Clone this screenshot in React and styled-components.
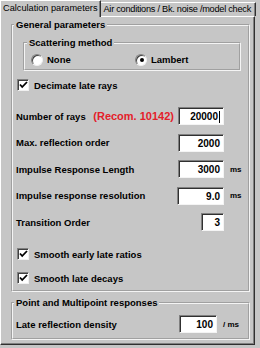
import React from 'react'
import styled, { createGlobalStyle } from 'styled-components'

const face = '#c6c6c6'

const GlobalStyle = createGlobalStyle`
  body {
    margin: 0;
    background: ${face};
  }
`

const Window = styled.div`
  width: 260px;
  height: 348px;
  background: ${face};
  font-family: "Liberation Sans", Arial, sans-serif;
  color: #000;
  overflow: hidden;
`

const TabStrip = styled.div`
  display: flex;
  align-items: flex-end;
  height: 16px;
  width: 256px;
  position: relative;
  z-index: 1;
`

const Tab = styled.div`
  box-sizing: border-box;
  height: ${p => (p.$active ? '17px' : '14px')};
  margin-bottom: ${p => (p.$active ? '-1px' : '0')};
  padding: ${p => (p.$active ? '1px 3px 0 2px' : '0 2px 0 2px')};
  font-size: 9.2px;
  letter-spacing: ${p => (p.$active ? '0' : '-0.25px')};
  line-height: 13px;
  white-space: nowrap;
  overflow: hidden;
  background: ${face};
  border-top: 1px solid #fff;
  border-left: ${p => (p.$active ? '1px solid #fff' : 'none')};
  border-right: 1px solid #303030;
  box-shadow: inset -1px 0 0 #808080;
  flex: ${p => (p.$active ? '0 0 auto' : '1 1 auto')};
`

const Panel = styled.div`
  box-sizing: border-box;
  width: 255px;
  height: 329px;
  padding: 1px 4px 0 10px;
  border-top: 1px solid #fff;
  border-left: 1px solid #fff;
  border-right: 1px solid #303030;
  border-bottom: 1px solid #303030;
  box-shadow: inset -1px -1px 0 #808080;
`

const Group = styled.fieldset`
  margin: ${p => p.$margin || '0'};
  padding: ${p => p.$padding || '0 0 5px 3px'};
  border: 2px groove #f4f4f4;
  min-width: 0;
`

const Legend = styled.legend`
  margin-left: ${p => p.$offset || '-2px'};
  padding: 0 2px;
  font-size: 9.5px;
  font-weight: bold;
  line-height: 13px;
`

const RadioRow = styled.div`
  display: grid;
  grid-template-columns: 104px auto;
  align-items: center;
  margin-top: 4px;
  height: 13px;
`

const RadioItem = styled.div`
  display: flex;
  align-items: center;
  gap: 4px;
  font-size: 9.5px;
  font-weight: bold;
`

const RadioCircle = styled.span`
  box-sizing: border-box;
  width: 12px;
  height: 12px;
  border-radius: 50%;
  background: #fff;
  border: 1px solid;
  border-color: #808080 #f0f0f0 #f0f0f0 #808080;
  box-shadow: inset 1px 1px 0 #404040;
  display: flex;
  align-items: center;
  justify-content: center;
`

const RadioDot = styled.span`
  width: 4px;
  height: 4px;
  border-radius: 50%;
  background: #000;
  margin: 1px 0 0 1px;
`

const CheckRow = styled.div`
  display: flex;
  align-items: center;
  gap: 5px;
  height: 14px;
  margin-top: ${p => p.$top || '0'};
  padding-left: 1px;
  font-size: 9.5px;
  font-weight: bold;
`

const CheckBox = styled.span`
  box-sizing: border-box;
  width: 12px;
  height: 12px;
  background: #fff;
  border: 1px solid;
  border-color: #808080 #f0f0f0 #f0f0f0 #808080;
  box-shadow: inset 1px 1px 0 #404040;
  display: flex;
  align-items: center;
  justify-content: center;
`

const FieldGrid = styled.div`
  display: grid;
  grid-auto-rows: 18px;
  row-gap: 8.5px;
  margin-top: ${p => p.$top || '15px'};
`

const FieldRow = styled.div`
  display: flex;
  align-items: center;
  font-size: 9.5px;
  font-weight: bold;
`

const Label = styled.span`
  flex: 1 1 auto;
  white-space: nowrap;
`

const Hint = styled.span`
  color: #e4202a;
  font-size: 11px;
  margin-right: 4px;
  white-space: nowrap;
`

const Field = styled.div`
  box-sizing: border-box;
  width: ${p => p.$width}px;
  height: 18px;
  background: #fff;
  border: 1px solid;
  border-color: #808080 #f4f4f4 #f4f4f4 #808080;
  box-shadow: inset 1px 1px 0 #303030;
  display: flex;
  align-items: center;
  justify-content: flex-end;
  padding: 1px 3px 0 0;
  font-size: 10px;
  font-weight: bold;
`

const Caret = styled.span`
  width: 1px;
  height: 12px;
  background: #000;
  margin-left: 1px;
`

const Unit = styled.span`
  width: ${p => p.$width}px;
  box-sizing: border-box;
  padding-left: 6px;
  font-size: 8px;
  white-space: nowrap;
`

const Check = () => (
  <svg width="9" height="8" viewBox="0 0 9 8">
    <path d="M1 3.5 L3.2 6 L8 1" fill="none" stroke="#000" strokeWidth="1.8" />
  </svg>
)

const rows = [
  { label: 'Number of rays', hint: '(Recom. 10142)', value: '20000', width: 46, caret: true },
  { label: 'Max. reflection order', value: '2000', width: 46 },
  { label: 'Impulse Response Length', value: '3000', width: 46, unit: 'ms' },
  { label: 'Impulse response resolution', value: '9.0', width: 47, unit: 'ms' },
  { label: 'Transition Order', value: '3', width: 23 },
]

const App = () => {
  return (
    <Window>
      <GlobalStyle />
      <TabStrip>
        <Tab $active>Calculation parameters</Tab>
        <Tab>Air conditions / Bk. noise /model check</Tab>
      </TabStrip>
      <Panel>
        <Group>
          <Legend>General parameters</Legend>
          <Group $margin="5px 7px 0 7px" $padding="0 0 3px 6px">
            <Legend $offset="-4px">Scattering method</Legend>
            <RadioRow>
              <RadioItem>
                <RadioCircle />
                None
              </RadioItem>
              <RadioItem>
                <RadioCircle>
                  <RadioDot />
                </RadioCircle>
                Lambert
              </RadioItem>
            </RadioRow>
          </Group>
          <CheckRow $top="7px">
            <CheckBox><Check /></CheckBox>
            Decimate late rays
          </CheckRow>
          <FieldGrid>
            {rows.map(r => (
              <FieldRow key={r.label}>
                <Label>{r.label}</Label>
                {r.hint && <Hint>{r.hint}</Hint>}
                <Field $width={r.width}>
                  {r.value}
                  {r.caret && <Caret />}
                </Field>
                <Unit $width={24}>{r.unit}</Unit>
              </FieldRow>
            ))}
          </FieldGrid>
          <CheckRow $top="16px">
            <CheckBox><Check /></CheckBox>
            Smooth early late ratios
          </CheckRow>
          <CheckRow $top="10px">
            <CheckBox><Check /></CheckBox>
            Smooth late decays
          </CheckRow>
        </Group>
        <Group $margin="4px 0 0 0">
          <Legend>Point and Multipoint responses</Legend>
          <FieldGrid $top="6px">
            <FieldRow>
              <Label>Late reflection density</Label>
              <Field $width={38}>100</Field>
              <Unit $width={31}>/ ms</Unit>
            </FieldRow>
          </FieldGrid>
        </Group>
      </Panel>
    </Window>
  )
}

export default App
